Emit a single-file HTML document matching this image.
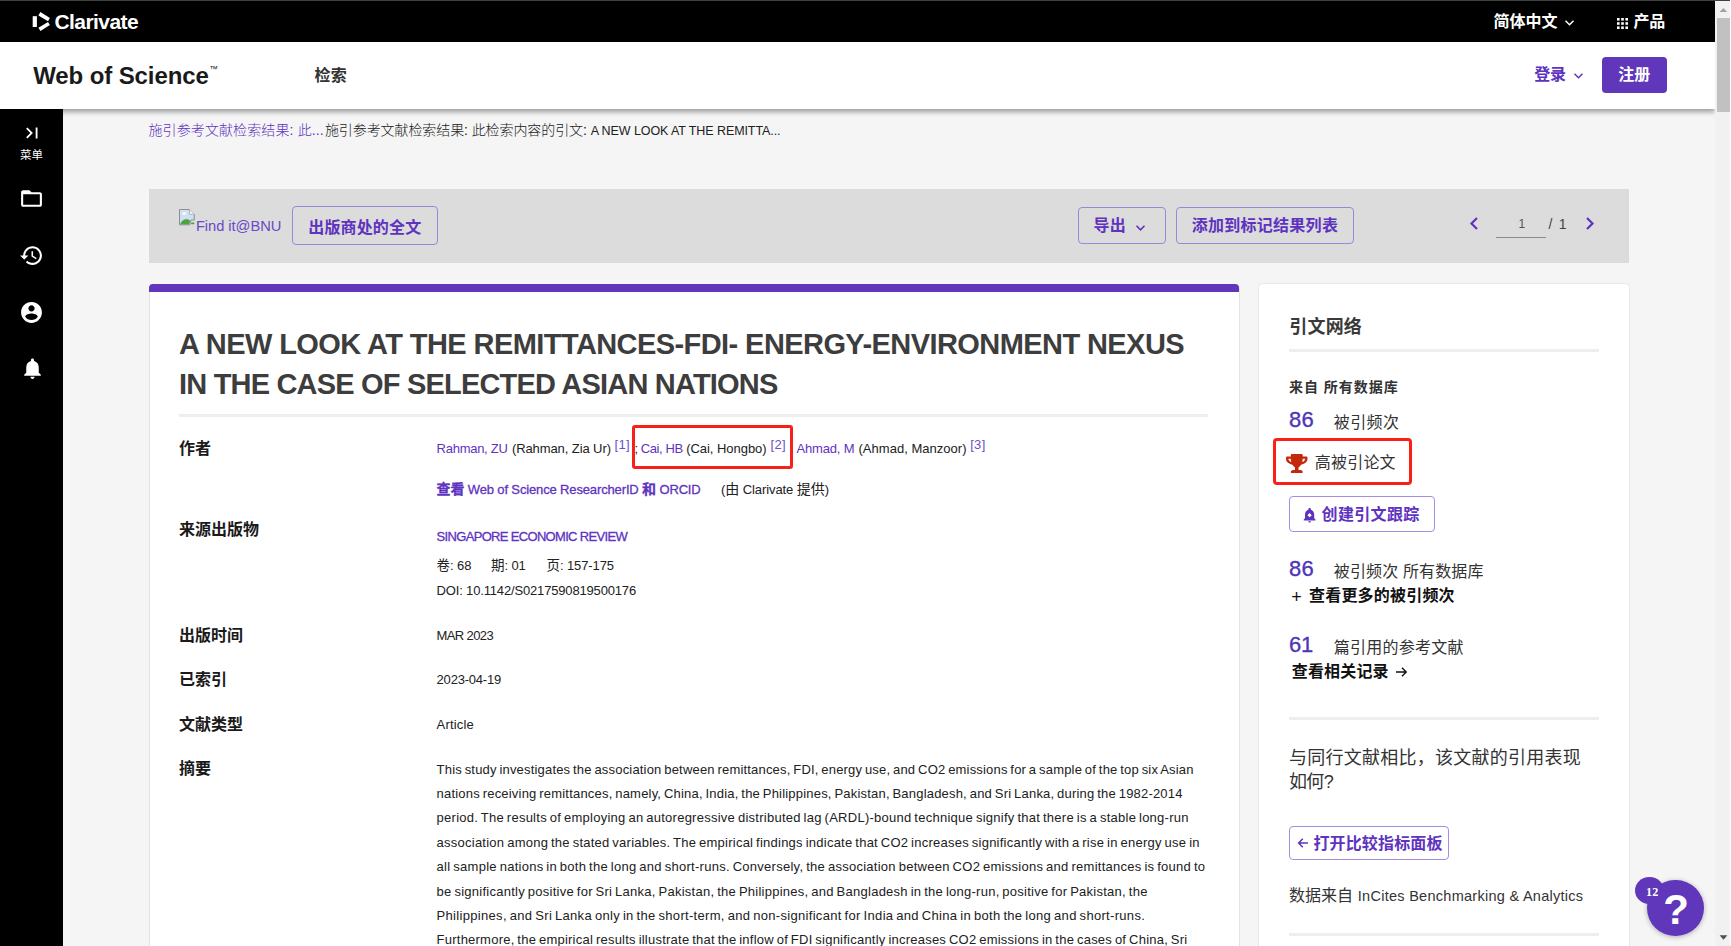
<!DOCTYPE html>
<html lang="zh-CN">
<head>
<meta charset="utf-8">
<title>Web of Science</title>
<style>
*{box-sizing:border-box;margin:0;padding:0}
html,body{width:1731px;height:946px;overflow:hidden;background:#f5f5f5}
body{position:relative;font-family:"Liberation Sans","Noto Sans CJK SC",sans-serif;color:#212121;font-size:14px}
.abs{position:absolute}
.cjk{font-family:"Liberation Sans","Noto Sans CJK SC",sans-serif}
a{color:#5e33bf;text-decoration:none}
.p{color:#5e33bf}
/* top bars */
#topbar{left:0;top:0;width:1714.5px;height:42px;background:#000}
#topline{left:0;top:0;width:1730px;height:1.2px;background:#3f433f}
#rcol{left:1730px;top:0;width:1px;height:946px;background:#fff}
#header{left:0;top:42px;width:1714.5px;height:67px;background:#fff;box-shadow:0 3px 5px rgba(0,0,0,.36)}
#side{left:0;top:109px;width:62.5px;height:837px;background:#000}
#scroll{left:1714.5px;top:0;width:16px;height:946px;background:#f1f1f1}
#thumb{left:1716.5px;top:17.8px;width:13.4px;height:94px;background:#c1c1c1}
.t{position:absolute;white-space:nowrap;line-height:1}
/* toolbar */
#toolbar{left:148.6px;top:188.5px;width:1480.5px;height:74.7px;background:#dcdcdc}
.btn{position:absolute;border:1px solid #9f85d9;border-radius:4px;color:#5e33bf;font-weight:bold;white-space:nowrap}
/* cards */
#main{left:148.5px;top:284px;width:1091px;height:680px;background:#fff;border-radius:5px 5px 0 0;border:1px solid #e3e3e3;border-top:0}
#bar{left:148.5px;top:284px;width:1090.8px;height:8px;background:#6037bb;border-radius:4px 4px 0 0}
#right{left:1259.2px;top:284px;width:370px;height:680px;background:#fff;border-radius:4px;box-shadow:0 0 0 1px #e9e9e9,0 0 3px rgba(0,0,0,.06)}
.hr{position:absolute;height:3px;background:#eee}
.lbl{font-weight:bold;font-size:16px;color:#212121}
.val{font-size:12.5px;color:#212121}
</style>
</head>
<body>
<div id="topbar" class="abs"></div>
<div id="side" class="abs"></div>
<div id="toolbar" class="abs"></div>
<div id="main" class="abs"></div>
<div id="bar" class="abs"></div>
<div id="right" class="abs"></div>
<div id="header" class="abs"></div>
<div id="scroll" class="abs"></div>
<div id="thumb" class="abs"></div>
<div id="topline" class="abs"></div>
<div id="rcol" class="abs"></div>

<!-- Clarivate logo -->
<svg class="abs" style="left:30px;top:10px" width="24" height="24" viewBox="30 10 24 24" fill="#fff"><path d="M32.700 16.200H36.900V27H32.700Z"/><path d="M40.400 12.100L49.900 18.100L48 21.300L38.400 15.400Z"/><path d="M40.400 31.100L49.900 25.100L48 21.900L38.400 27.800Z"/></svg>
<!-- chevrons -->
<svg class="abs" style="left:1564px;top:19px" width="11" height="8" viewBox="0 0 11 8"><path d="M1.5 1.8L5.5 5.8L9.5 1.8" fill="none" stroke="#fff" stroke-width="1.5"/></svg>
<svg class="abs" style="left:1573px;top:72px" width="11" height="8" viewBox="0 0 11 8"><path d="M1.5 1.8L5.5 5.8L9.5 1.8" fill="none" stroke="#5e33bf" stroke-width="1.5"/></svg>
<svg class="abs" style="left:1135px;top:224px" width="11" height="8" viewBox="0 0 11 8"><path d="M1.5 1.8L5.5 5.8L9.5 1.8" fill="none" stroke="#5e33bf" stroke-width="1.6"/></svg>
<!-- grid -->
<svg class="abs" style="left:1617px;top:17.6px" width="11" height="11" viewBox="0 0 11 11" fill="#fff"><rect x="0" y="0" width="2.6" height="2.6"/><rect x="4.2" y="0" width="2.6" height="2.6"/><rect x="8.4" y="0" width="2.6" height="2.6"/><rect x="0" y="4.2" width="2.6" height="2.6"/><rect x="4.2" y="4.2" width="2.6" height="2.6"/><rect x="8.4" y="4.2" width="2.6" height="2.6"/><rect x="0" y="8.4" width="2.6" height="2.6"/><rect x="4.2" y="8.4" width="2.6" height="2.6"/><rect x="8.4" y="8.4" width="2.6" height="2.6"/></svg>
<!-- register button -->
<div class="abs" style="left:1602px;top:57px;width:65.4px;height:36.2px;background:#6037bb;border-radius:4px"></div>
<!-- sidebar icons -->
<svg class="abs" style="left:21px;top:122px" width="22" height="22" viewBox="0 0 24 24" fill="#fff"><path d="M5.59 7.41L10.18 12l-4.59 4.59L7 18l6-6-6-6zM16 6h2v12h-2z"/></svg>
<svg class="abs" style="left:19.2px;top:186.2px" width="25" height="25" viewBox="0 0 24 24" fill="#fff"><path d="M20 6h-8l-2-2H4c-1.1 0-1.99.9-1.99 2L2 18c0 1.1.9 2 2 2h16c1.1 0 2-.9 2-2V8c0-1.1-.9-2-2-2zm0 12H4V8h16v10z"/></svg>
<svg class="abs" style="left:19px;top:243.4px" width="25" height="25" viewBox="0 0 24 24" fill="#fff"><path d="M13 3c-4.97 0-9 4.03-9 9H1l3.89 3.89.07.14L9 12H6c0-3.87 3.13-7 7-7s7 3.13 7 7-3.13 7-7 7c-1.93 0-3.68-.79-4.94-2.06l-1.42 1.42C8.27 19.99 10.51 21 13 21c4.97 0 9-4.03 9-9s-4.03-9-9-9zm-1 5v5l4.28 2.54.72-1.21-3.5-2.08V8H12z"/></svg>
<svg class="abs" style="left:19.3px;top:299.5px" width="25" height="25" viewBox="0 0 24 24" fill="#fff"><path d="M12 2C6.48 2 2 6.48 2 12s4.48 10 10 10 10-4.48 10-10S17.52 2 12 2zm0 3c1.66 0 3 1.34 3 3s-1.34 3-3 3-3-1.34-3-3 1.34-3 3-3zm0 14.2c-2.5 0-4.71-1.28-6-3.22.03-1.99 4-3.08 6-3.08 1.99 0 5.97 1.09 6 3.08-1.29 1.94-3.5 3.22-6 3.22z"/></svg>
<svg class="abs" style="left:19.6px;top:356.3px" width="25" height="25" viewBox="0 0 24 24" fill="#fff"><path d="M12 22c1.1 0 2-.9 2-2h-4c0 1.1.89 2 2 2zm6-6v-5c0-3.07-1.64-5.64-4.5-6.32V4c0-.83-.67-1.5-1.5-1.5s-1.500.67-1.500 1.500v.68C7.630 5.360 6 7.920 6 11v5l-2 2v1h16v-1l-2-2z"/></svg>
<!-- toolbar: broken image + buttons -->
<svg class="abs" style="left:179px;top:209.4px" width="16" height="16.4" viewBox="0 0 16 16.4"><path d="M.5 .5H10.500L15.300 5.300V11H12L10.500 15.800H.5Z" fill="#cfdff5" stroke="#8d8d8d" stroke-width="1"/><path d="M10.500 .5V5.300H15.300" fill="#f4f4f4" stroke="#a9a9a9" stroke-width=".8"/><ellipse cx="5.200" cy="4.600" rx="2.400" ry="1.100" fill="#fff"/><path d="M1.200 15.200C2 12 5 9.800 8.500 10.300C10 10.600 11 11.500 11 12.300L10 15.200Z" fill="#4aa53c"/><path d="M11.500 15.200L12.600 13.600H15.300V15.200Z" fill="#4aa53c"/></svg>
<div class="btn" style="left:292px;top:206px;width:146px;height:39px"></div>
<div class="btn" style="left:1078px;top:207px;width:88px;height:37px"></div>
<div class="btn" style="left:1176px;top:207px;width:178px;height:37px"></div>
<svg class="abs" style="left:1468px;top:216px" width="12" height="15" viewBox="0 0 12 15"><path d="M9 2L3.500 7.500L9 13" fill="none" stroke="#5e33bf" stroke-width="2.2"/></svg>
<svg class="abs" style="left:1584px;top:216px" width="12" height="15" viewBox="0 0 12 15"><path d="M3 2L8.500 7.500L3 13" fill="none" stroke="#5e33bf" stroke-width="2.2"/></svg>
<div class="abs" style="left:1495.500px;top:236.500px;width:50.500px;height:1px;background:#8a8a8a"></div>
<!-- main card lines/boxes -->
<div class="hr" style="left:179px;top:414px;width:1029px"></div>
<div class="abs" style="left:631.5px;top:424.7px;width:161.3px;height:44px;border:3px solid #f7211a;border-radius:3px"></div>
<!-- right card -->
<div class="hr" style="left:1289px;top:348.500px;width:310px;height:3.500px"></div>
<div class="hr" style="left:1289px;top:716.500px;width:310px;height:3.500px"></div>
<div class="hr" style="left:1289px;top:932.500px;width:310px;height:3.500px"></div>
<div class="abs" style="left:1273px;top:438.2px;width:139.3px;height:46.4px;border:3.5px solid #fb2015;border-radius:4px"></div>
<svg class="abs" style="left:1286px;top:453.500px" width="21.500" height="19" viewBox="0 0 576 512" fill="#c4290b"><path d="M552 64H448V24c0-13.300-10.700-24-24-24H152c-13.300 0-24 10.700-24 24v40H24C10.700 64 0 74.700 0 88v56c0 35.700 22.500 72.400 61.900 100.700 31.500 22.700 69.800 37.100 110 41.700C203.300 338.500 240 360 240 360v72h-48c-35.300 0-64 20.700-64 56v12c0 6.600 5.400 12 12 12h296c6.600 0 12-5.400 12-12v-12c0-35.300-28.700-56-64-56h-48v-72s36.700-21.500 68.100-73.600c40.300-4.600 78.600-19 110-41.700 39.300-28.300 61.900-65 61.900-100.700V88c0-13.300-10.700-24-24-24zM99.300 192.800C74.900 175.200 64 155.600 64 144v-16h64.200c1 32.600 5.800 61.200 12.800 86.200-15.100-5.200-29.200-12.400-41.700-21.400zM512 144c0 16.100-17.700 36.100-35.300 48.800-12.500 9-26.700 16.200-41.800 21.400 7-25 11.800-53.600 12.800-86.200H512v16z"/></svg>
<div class="btn" style="left:1289px;top:496px;width:146px;height:36px;border-color:#a48ce0"></div>
<svg class="abs" style="left:1302.6px;top:507px" width="13.2" height="16.5" viewBox="0 0 16 20"><path d="M8 1.2c-.9 0-1.500.65-1.500 1.500v.5C3.900 3.900 2.400 6.200 2.400 9v4.600L.9 15.300v1h14.200v-1l-1.500-1.700V9c0-2.800-1.500-5.100-4.100-5.800v-.5c0-.85-.6-1.500-1.500-1.500zM6.300 17.200c0 .95.75 1.700 1.700 1.700s1.700-.75 1.700-1.700z" fill="#5e33bf"/><path d="M8 7.300L10.600 9.900L8 12.500L5.400 9.900Z" fill="#fff"/></svg>
<div class="btn" style="left:1289px;top:826px;width:160px;height:34px;border-color:#a48ce0"></div>
<svg class="abs" style="left:1296.500px;top:837px" width="12" height="12" viewBox="0 0 12 12"><path d="M11 6H1.800M5.800 1.800L1.600 6L5.800 10.200" fill="none" stroke="#5e33bf" stroke-width="1.500"/></svg>
<svg class="abs" style="left:1394.500px;top:666px" width="13" height="12" viewBox="0 0 13 12"><path d="M1 6H11M7 1.800L11.200 6L7 10.200" fill="none" stroke="#111" stroke-width="1.400"/></svg>
<!-- help -->
<div class="abs" style="left:1647.4px;top:879.5px;width:56.8px;height:56.8px;border-radius:50%;background:#6037bb;box-shadow:0 1px 5px rgba(0,0,0,.3)"></div>
<div class="abs" style="left:1635.2px;top:877px;width:28.5px;height:27px;border-radius:50%;background:#6037bb"></div>
<!-- scrollbar arrows -->
<svg class="abs" style="left:1715px;top:0" width="16" height="17" viewBox="0 0 16 17"><path d="M4.500 12L8.400 8L12.300 12Z" fill="#a3a3a3"/></svg>
<svg class="abs" style="left:1715px;top:929px" width="16" height="17" viewBox="0 0 16 17"><path d="M4.600 6.200L8.500 10.800L12.400 6.200Z" fill="#505050"/></svg>

<div class="t" style="left:54.5px;top:11.2px;font-size:21px;font-weight:700;color:#fff;letter-spacing:-0.580px;">Clarivate</div>
<div class="t" style="left:1493.4px;top:14.2px;font-size:16px;font-weight:700;color:#fff;letter-spacing:0.046px;">简体中文</div>
<div class="t" style="left:1633.5px;top:14.2px;font-size:16px;font-weight:700;color:#fff;letter-spacing:-0.208px;">产品</div>
<div class="t" style="left:33.2px;top:63.8px;font-size:24px;font-weight:700;color:#1a1a1a;letter-spacing:-0.104px;">Web of Science</div>
<div class="t" style="left:209.3px;top:65.1px;font-size:8.5px;color:#222;letter-spacing:-0.300px;">™</div>
<div class="t" style="left:314.5px;top:68.1px;font-size:16px;font-weight:700;color:#333;letter-spacing:0.242px;">检索</div>
<div class="t" style="left:1534.2px;top:67.1px;font-size:16px;font-weight:700;color:#5e33bf;letter-spacing:-0.158px;">登录</div>
<div class="t" style="left:1618.3px;top:67.4px;font-size:16px;font-weight:700;color:#fff;letter-spacing:-0.008px;">注册</div>
<div class="t" style="left:20.0px;top:149.6px;font-size:11.5px;color:#fff;letter-spacing:0.000px;">菜单</div>
<div class="t" style="left:148.4px;top:122.9px;font-size:14px;font-weight:300;color:#5e33bf;letter-spacing:0.122px;">施引参考文献检索结果: 此...</div>
<div class="t" style="left:324.9px;top:122.9px;font-size:14px;font-weight:300;letter-spacing:-0.083px;">施引参考文献检索结果: 此检索内容的引文: <span style="font-size:12.5px">A NEW LOOK AT THE REMITTA...</span></div>
<div class="t" style="left:195.9px;top:218.5px;font-size:14.7px;color:#6b48c6;letter-spacing:-0.047px;">Find it@BNU</div>
<div class="t" style="left:308.3px;top:219.6px;font-size:16px;font-weight:700;color:#5e33bf;letter-spacing:0.141px;">出版商处的全文</div>
<div class="t" style="left:1093.5px;top:218.4px;font-size:16px;font-weight:700;color:#5e33bf;letter-spacing:0.242px;">导出</div>
<div class="t" style="left:1191.7px;top:218.4px;font-size:16px;font-weight:700;color:#5e33bf;letter-spacing:0.276px;">添加到标记结果列表</div>
<div class="t" style="left:1518.5px;top:217.8px;font-size:12px;color:#555;">1</div>
<div class="t" style="left:1548.6px;top:216.6px;font-size:14px;color:#444;letter-spacing:1.141px;">/ 1</div>
<div class="t" style="left:179.0px;top:329.7px;font-size:29px;font-weight:700;color:#3d3d3d;letter-spacing:-0.579px;">A NEW LOOK AT THE REMITTANCES-FDI- ENERGY-ENVIRONMENT NEXUS</div>
<div class="t" style="left:179.0px;top:369.5px;font-size:29px;font-weight:700;color:#3d3d3d;letter-spacing:-0.807px;">IN THE CASE OF SELECTED ASIAN NATIONS</div>
<div class="t" style="left:179.0px;top:440.5px;font-size:16px;font-weight:700;color:#1a1a1a;letter-spacing:-0.008px;">作者</div>
<div class="t" style="left:179.0px;top:521.5px;font-size:16px;font-weight:700;color:#1a1a1a;letter-spacing:-0.003px;">来源出版物</div>
<div class="t" style="left:179.0px;top:627.5px;font-size:16px;font-weight:700;color:#1a1a1a;letter-spacing:-0.004px;">出版时间</div>
<div class="t" style="left:179.0px;top:672.0px;font-size:16px;font-weight:700;color:#1a1a1a;letter-spacing:-0.005px;">已索引</div>
<div class="t" style="left:179.0px;top:716.5px;font-size:16px;font-weight:700;color:#1a1a1a;letter-spacing:-0.004px;">文献类型</div>
<div class="t" style="left:179.0px;top:761.0px;font-size:16px;font-weight:700;color:#1a1a1a;letter-spacing:-0.008px;">摘要</div>
<div class="t" style="left:436.6px;top:442.0px;font-size:13px;color:#5e33bf;letter-spacing:-0.270px;">Rahman, ZU</div>
<div class="t" style="left:511.9px;top:442.0px;font-size:13px;letter-spacing:-0.089px;">(Rahman, Zia Ur)</div>
<div class="t" style="left:614.6px;top:437.9px;font-size:13px;color:#6e4fcb;letter-spacing:0.310px;">[1]</div>
<div class="t" style="left:634.5px;top:442.0px;font-size:13px;">;</div>
<div class="t" style="left:640.8px;top:442.0px;font-size:13px;color:#5e33bf;letter-spacing:-0.400px;">Cai, HB</div>
<div class="t" style="left:686.2px;top:442.0px;font-size:13px;letter-spacing:-0.041px;">(Cai, Hongbo)</div>
<div class="t" style="left:770.6px;top:437.9px;font-size:13px;color:#6e4fcb;letter-spacing:0.310px;">[2]</div>
<div class="t" style="left:796.4px;top:442.0px;font-size:13px;color:#5e33bf;letter-spacing:-0.156px;">Ahmad, M</div>
<div class="t" style="left:858.5px;top:442.0px;font-size:13px;letter-spacing:0.021px;">(Ahmad, Manzoor)</div>
<div class="t" style="left:970.2px;top:437.9px;font-size:13px;color:#6e4fcb;letter-spacing:0.310px;">[3]</div>
<div class="t" style="left:436.6px;top:481.7px;font-size:13px;color:#5e33bf;letter-spacing:-0.141px;-webkit-text-stroke:.3px #5e33bf;"><b style="font-size:14px">查看</b> Web of Science ResearcherID <b style="font-size:14px">和</b> ORCID</div>
<div class="t" style="left:720.9px;top:481.7px;font-size:13px;letter-spacing:-0.076px;">(<span style="font-size:14px">由</span> Clarivate <span style="font-size:14px">提供</span>)</div>
<div class="t" style="left:436.6px;top:529.6px;font-size:13px;color:#5e33bf;letter-spacing:-0.676px;-webkit-text-stroke:.3px #5e33bf;">SINGAPORE ECONOMIC REVIEW</div>
<div class="t" style="left:436.6px;top:559.3px;font-size:13px;letter-spacing:-0.097px;"><span style="font-size:13.5px">卷</span>: 68</div>
<div class="t" style="left:491.0px;top:559.3px;font-size:13px;letter-spacing:-0.097px;"><span style="font-size:13.5px">期</span>: 01</div>
<div class="t" style="left:546.5px;top:559.3px;font-size:13px;letter-spacing:-0.094px;"><span style="font-size:13.5px">页</span>: 157-175</div>
<div class="t" style="left:436.6px;top:584.0px;font-size:13px;letter-spacing:-0.164px;">DOI: 10.1142/S0217590819500176</div>
<div class="t" style="left:436.6px;top:628.6px;font-size:13px;letter-spacing:-0.628px;">MAR 2023</div>
<div class="t" style="left:436.6px;top:673.0px;font-size:13px;letter-spacing:-0.210px;">2023-04-19</div>
<div class="t" style="left:436.6px;top:717.6px;font-size:13px;letter-spacing:0.182px;">Article</div>
<div class="t" style="left:436.6px;top:762.7px;font-size:13px;letter-spacing:0.181px;word-spacing:-1px;">This study investigates the association between remittances, FDI, energy use, and CO2 emissions for a sample of the top six Asian</div>
<div class="t" style="left:436.6px;top:787.1px;font-size:13px;letter-spacing:0.196px;word-spacing:-1px;">nations receiving remittances, namely, China, India, the Philippines, Pakistan, Bangladesh, and Sri Lanka, during the 1982-2014</div>
<div class="t" style="left:436.6px;top:811.4px;font-size:13px;letter-spacing:0.256px;word-spacing:-1px;">period. The results of employing an autoregressive distributed lag (ARDL)-bound technique signify that there is a stable long-run</div>
<div class="t" style="left:436.6px;top:835.8px;font-size:13px;letter-spacing:0.243px;word-spacing:-1px;">association among the stated variables. The empirical findings indicate that CO2 increases significantly with a rise in energy use in</div>
<div class="t" style="left:436.6px;top:860.1px;font-size:13px;letter-spacing:0.266px;word-spacing:-1px;">all sample nations in both the long and short-runs. Conversely, the association between CO2 emissions and remittances is found to</div>
<div class="t" style="left:436.6px;top:884.5px;font-size:13px;letter-spacing:0.255px;word-spacing:-1px;">be significantly positive for Sri Lanka, Pakistan, the Philippines, and Bangladesh in the long-run, positive for Pakistan, the</div>
<div class="t" style="left:436.6px;top:908.9px;font-size:13px;letter-spacing:0.310px;word-spacing:-1px;">Philippines, and Sri Lanka only in the short-term, and non-significant for India and China in both the long and short-runs.</div>
<div class="t" style="left:436.6px;top:933.2px;font-size:13px;letter-spacing:0.231px;word-spacing:-1px;">Furthermore, the empirical results illustrate that the inflow of FDI significantly increases CO2 emissions in the cases of China, Sri</div>
<div class="t" style="left:1289.3px;top:318.3px;font-size:18px;font-weight:700;color:#3a3a3a;letter-spacing:0.175px;">引文网络</div>
<div class="t" style="left:1289.0px;top:379.9px;font-size:14px;font-weight:700;color:#333;letter-spacing:0.976px;">来自 所有数据库</div>
<div class="t" style="left:1289.0px;top:409.3px;font-size:22px;color:#4f35b8;letter-spacing:0.258px;-webkit-text-stroke:.35px #4f35b8;">86</div>
<div class="t" style="left:1333.8px;top:414.5px;font-size:16px;color:#333;letter-spacing:0.371px;">被引频次</div>
<div class="t" style="left:1314.8px;top:454.5px;font-size:16px;color:#333;letter-spacing:0.197px;">高被引论文</div>
<div class="t" style="left:1321.6px;top:506.7px;font-size:16px;font-weight:700;color:#5e33bf;letter-spacing:0.331px;">创建引文跟踪</div>
<div class="t" style="left:1289.0px;top:558.0px;font-size:22px;color:#4f35b8;letter-spacing:0.258px;-webkit-text-stroke:.35px #4f35b8;">86</div>
<div class="t" style="left:1333.8px;top:564.1px;font-size:16px;color:#333;letter-spacing:0.135px;">被引频次 所有数据库</div>
<div class="t" style="left:1291.3px;top:588.2px;font-size:18px;color:#111;">+</div>
<div class="t" style="left:1309.0px;top:588.3px;font-size:16px;font-weight:700;color:#111;letter-spacing:0.198px;">查看更多的被引频次</div>
<div class="t" style="left:1289.0px;top:633.5px;font-size:22px;color:#4f35b8;letter-spacing:-0.242px;-webkit-text-stroke:.35px #4f35b8;">61</div>
<div class="t" style="left:1333.8px;top:639.7px;font-size:16px;color:#333;letter-spacing:0.248px;">篇引用的参考文献</div>
<div class="t" style="left:1291.8px;top:663.9px;font-size:16px;font-weight:700;color:#111;letter-spacing:0.164px;">查看相关记录</div>
<div class="t" style="left:1289.0px;top:749.3px;font-size:18px;color:#333;letter-spacing:0.250px;">与同行文献相比，该文献的引用表现</div>
<div class="t" style="left:1289.0px;top:772.9px;font-size:18px;color:#333;letter-spacing:-0.672px;">如何?</div>
<div class="t" style="left:1313.4px;top:835.5px;font-size:16px;font-weight:700;color:#5e33bf;letter-spacing:0.148px;">打开比较指标面板</div>
<div class="t" style="left:1289.0px;top:888.4px;font-size:16px;color:#333;letter-spacing:-0.004px;">数据来自</div>
<div class="t" style="left:1357.8px;top:889.1px;font-size:14.5px;color:#333;letter-spacing:0.275px;">InCites Benchmarking &amp; Analytics</div>
<div class="t" style="left:1646.0px;top:885.5px;font-size:12px;font-weight:700;color:#fff;letter-spacing:0.300px;z-index:9;font-family:'Liberation Serif',serif;">12</div>
<div class="t" style="left:1663.2px;top:888.8px;font-size:42px;font-weight:700;color:#fff;z-index:9;">?</div>
</body>
</html>
